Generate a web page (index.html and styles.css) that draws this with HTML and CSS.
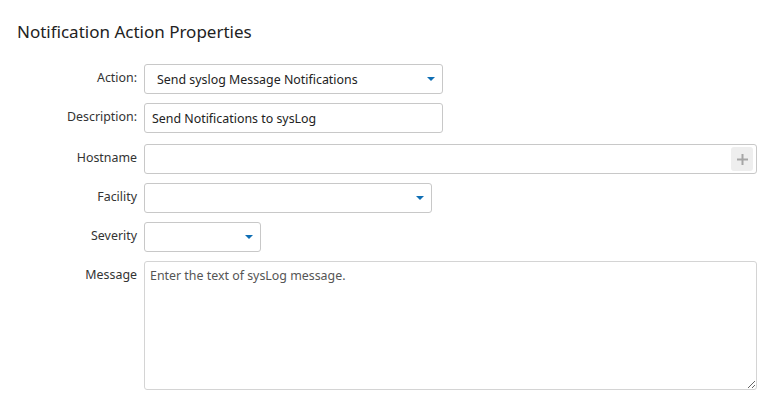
FILE: index.html
```html
<!DOCTYPE html>
<html lang="en">
<head>
    <meta charset="UTF-8">
    <title>Notification Action Properties</title>
    <link rel="stylesheet" href="styles.css">
</head>
<body>
    <div class="panel">
        <h1>Notification Action Properties</h1>

        <div class="form">
            <div class="row">
                <label>Action:</label>
                <div class="field select action">
                    <span class="value">Send syslog Message Notifications</span>
                    <span class="caret"></span>
                </div>
            </div>
            <div class="row row-desc">
                <label>Description:</label>
                <div class="field text desc">Send Notifications to sysLog</div>
            </div>
            <div class="row row-host">
                <label>Hostname</label>
                <div class="field text host">
                    <span class="add-btn">
                        <svg width="11" height="11" viewBox="0 0 11 11"><path d="M5.5 0v11M0 5.5h11" stroke="#a6a6a6" stroke-width="2"/></svg>
                    </span>
                </div>
            </div>
            <div class="row">
                <label>Facility</label>
                <div class="field select facility"><span class="caret"></span></div>
            </div>
            <div class="row">
                <label>Severity</label>
                <div class="field select severity"><span class="caret"></span></div>
            </div>
            <div class="row">
                <label class="top">Message</label>
                <textarea class="field message" placeholder="Enter the text of sysLog message."></textarea>
            </div>
        </div>
    </div>
</body>
</html>
```

FILE: styles.css
```css
body {
    margin: 0;
    font-family: "Noto Sans", "Liberation Sans", Arial, sans-serif;
    color: #333;
    background: #fff;
}
.panel {
    padding: 20px 0 0 17px;
}
h1 {
    margin: 0 0 21px 0;
    font-size: 17px;
    font-weight: 400;
    line-height: 23px;
    color: #222;
}
.form {
    display: flex;
    flex-direction: column;
    gap: 9px;
}
.row {
    display: flex;
    align-items: center;
    gap: 7px;
}
.row-host {
    margin-top: 2px;
}
.row label {
    width: 120px;
    text-align: right;
    font-size: 12.4px;
    color: #333;
    margin-top: -3px;
}
.row label.top {
    align-self: flex-start;
    margin-top: 0;
    padding-top: 5px;
}
.field {
    box-sizing: border-box;
    height: 30px;
    border: 1px solid #c8c8c8;
    border-radius: 3px;
    background: #fff;
    font-size: 12.4px;
    color: #222;
    display: flex;
    align-items: center;
}
.select {
    position: relative;
    padding: 0 0 0 12px;
}
.caret {
    position: absolute;
    right: 7px;
    top: 12px;
    width: 0;
    height: 0;
    border-left: 4px solid transparent;
    border-right: 4px solid transparent;
    border-top: 4px solid #0f6eb4;
}
.action {
    width: 299px;
}
.text {
    padding: 0 7px;
}
.desc {
    width: 299px;
}
.host {
    width: 613px;
    justify-content: flex-end;
    padding-right: 3px;
}
.add-btn {
    width: 22px;
    height: 24px;
    background: #eeeeee;
    border-radius: 3px;
    display: flex;
    align-items: center;
    justify-content: center;
}
.facility {
    width: 288px;
}
.severity {
    width: 117px;
}
.message {
    width: 613px;
    height: 129px;
    padding: 5px 5px;
    font-family: inherit;
    font-size: 12.4px;
    resize: both;
    display: block;
    outline: none;
    border-color: #d4d4d4;
}
.message::placeholder {
    color: #555;
}
```
